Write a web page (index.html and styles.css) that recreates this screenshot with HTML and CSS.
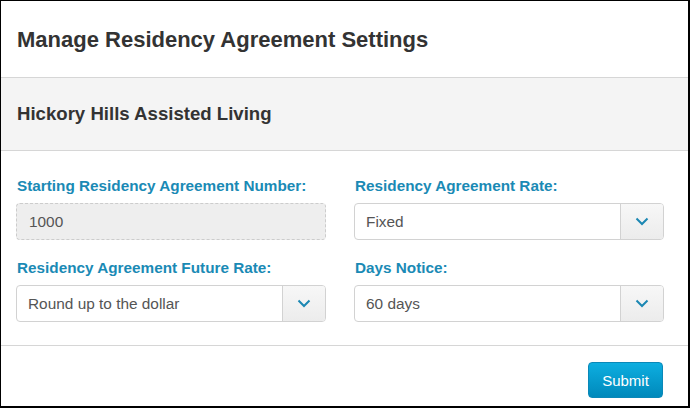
FILE: index.html
```html
<!DOCTYPE html>
<html>
<head>
<meta charset="utf-8">
<link rel="stylesheet" href="styles.css">
</head>
<body>
<div class="panel">
  <div class="panel-header"><h1 class="title">Manage Residency Agreement Settings</h1></div>
  <div class="sub-header"><h2 class="subtitle">Hickory Hills Assisted Living</h2></div>
  <div class="form">
    <div class="field">
      <label class="label">Starting Residency Agreement Number:</label>
      <div class="input disabled">1000</div>
    </div>
    <div class="field">
      <label class="label">Residency Agreement Rate:</label>
      <div class="select"><span class="value">Fixed</span><span class="caret"><svg width="14" height="9" viewBox="0 0 14 9"><path d="M1.5 1.5 L7 7 L12.5 1.5" fill="none" stroke="#1b87b3" stroke-width="2"/></svg></span></div>
    </div>
    <div class="field">
      <label class="label">Residency Agreement Future Rate:</label>
      <div class="select"><span class="value">Round up to the dollar</span><span class="caret"><svg width="14" height="9" viewBox="0 0 14 9"><path d="M1.5 1.5 L7 7 L12.5 1.5" fill="none" stroke="#1b87b3" stroke-width="2"/></svg></span></div>
    </div>
    <div class="field">
      <label class="label">Days Notice:</label>
      <div class="select"><span class="value">60 days</span><span class="caret"><svg width="14" height="9" viewBox="0 0 14 9"><path d="M1.5 1.5 L7 7 L12.5 1.5" fill="none" stroke="#1b87b3" stroke-width="2"/></svg></span></div>
    </div>
  </div>
  <div class="footer"><button class="btn">Submit</button></div>
</div>
</body>
</html>
```
FILE: styles.css
```css
html, body { margin: 0; padding: 0; }
body { font-family: "Liberation Sans", Arial, sans-serif; color: #333; background: #fff; }
.panel {
  width: 690px; height: 408px; box-sizing: border-box;
  border-style: solid; border-color: #000;
  border-width: 1px 2px 2px 1px;
  display: flex; flex-direction: column;
}
.panel-header {
  height: 77px; border-bottom: 1px solid #d6d6d6;
  display: flex; align-items: center; padding: 0 15px 0 16px; box-sizing: border-box;
}
.title { margin: 0; font-size: 22px; font-weight: bold; color: #333; padding-top: 2px; }
.sub-header {
  height: 73px; background: #f4f4f4; border-bottom: 1px solid #d6d6d6;
  display: flex; align-items: center; padding: 0 16px; box-sizing: border-box;
}
.subtitle { margin: 0; font-size: 18.6px; font-weight: bold; color: #333; }
.form {
  display: grid; grid-template-columns: 310px 310px; column-gap: 28px; row-gap: 18px;
  padding: 25px 24px 23px 15px; border-bottom: 1px solid #d6d6d6;
}
.field { display: flex; flex-direction: column; }
.label { font-size: 15.3px; font-weight: bold; color: #1a8ab5; line-height: 20px; margin-bottom: 7px; padding-left: 1px; }
.input, .select {
  height: 37px; box-sizing: border-box; border-radius: 4px; font-size: 15.4px; color: #555;
  display: flex; align-items: center;
}
.input.disabled { background: #eeeeee; border: 1px dashed #cccccc; padding: 0 12px; }
.select { border: 1px solid #d2d2d2; background: #fff; }
.select .value { flex: 1; padding: 0 11px; }
.caret {
  width: 42px; height: 100%; border-left: 1px solid #d2d2d2;
  background: linear-gradient(#f7f7f7, #ececec);
  display: flex; align-items: center; justify-content: center;
  border-radius: 0 3px 3px 0;
}
.footer { flex: 1; display: flex; justify-content: flex-end; align-items: flex-start; padding: 16px 25px 0 0; }
.btn {
  height: 36px; width: 75px; border: 1px solid #0a88b8; border-radius: 4px;
  background: linear-gradient(#0daee0, #0089bb); color: #fff;
  font-family: "Liberation Sans", Arial, sans-serif; font-size: 15px; padding: 0;
}
```
